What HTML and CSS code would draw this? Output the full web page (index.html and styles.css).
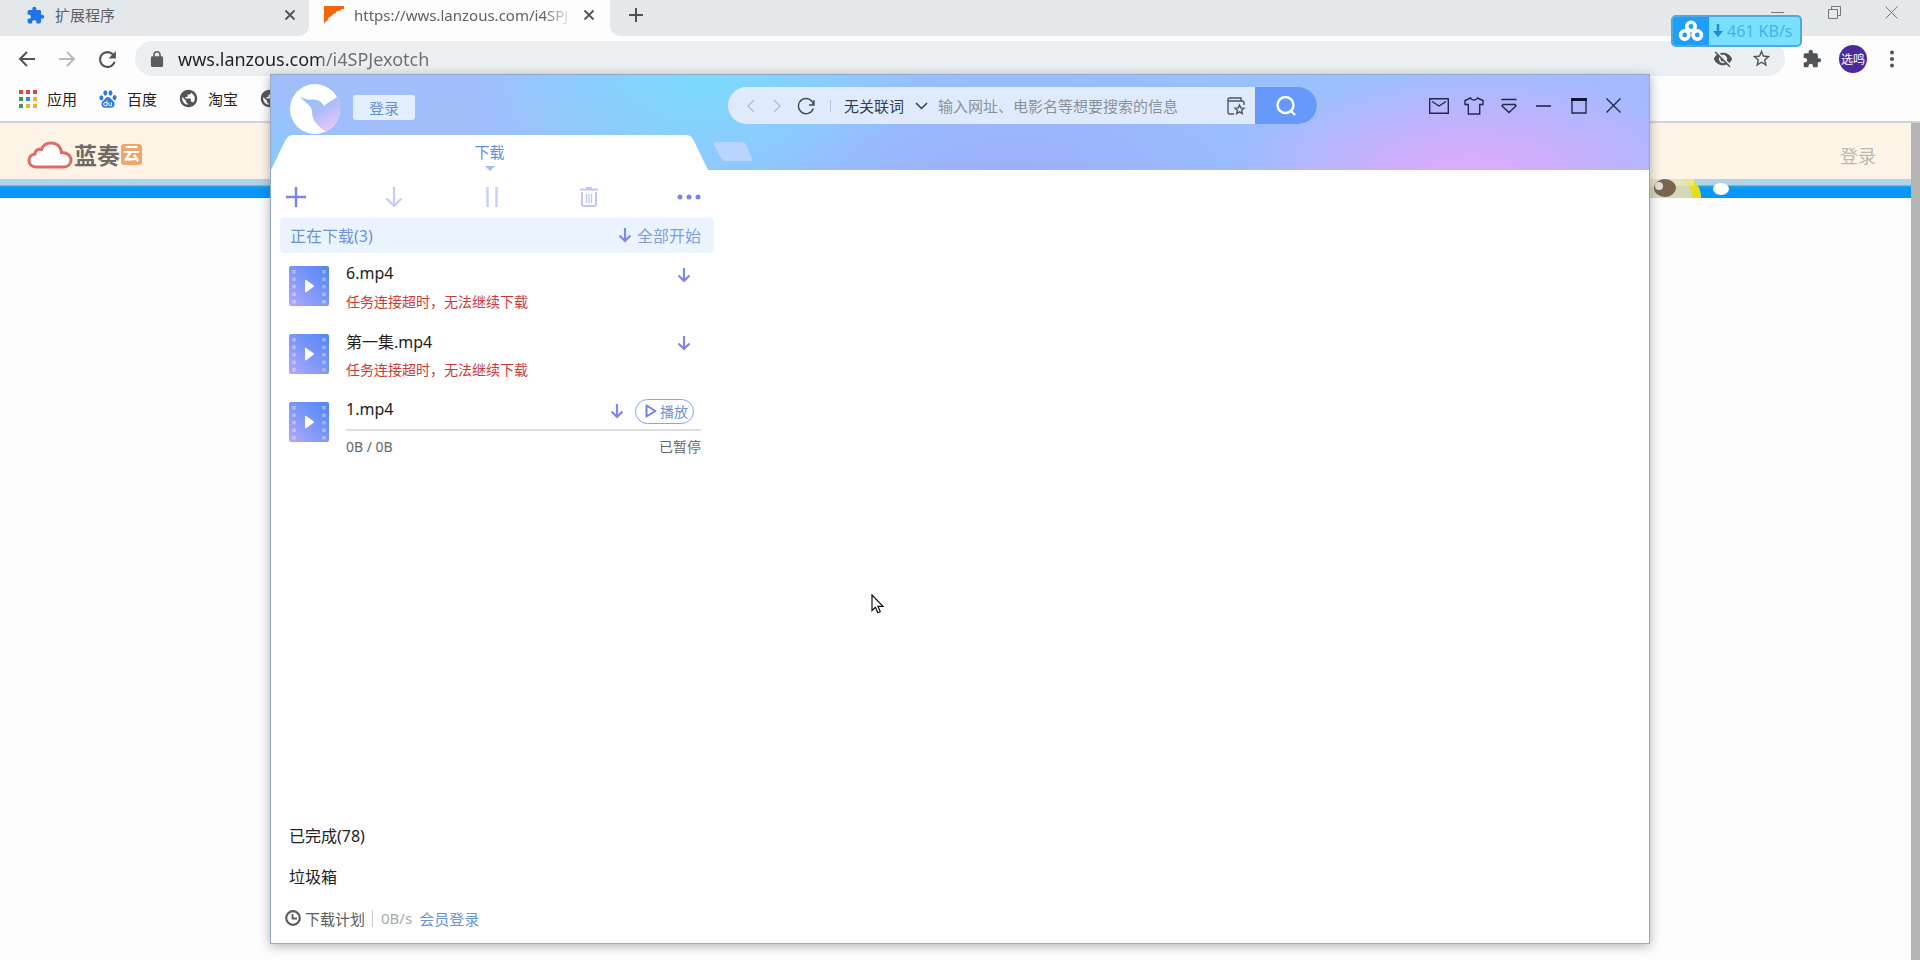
FILE: index.html
```html
<!DOCTYPE html>
<html lang="zh-CN">
<head>
<meta charset="utf-8">
<title>wws.lanzous.com/i4SPJexotch</title>
<link rel="stylesheet" href="styles.css">
</head>
<body>
<svg class="defs" width="0" height="0" aria-hidden="true">
  <defs>
    <linearGradient id="g-film" x1="0" y1="1" x2="1" y2="0">
      <stop offset="0" stop-color="#b4a8fb"/><stop offset=".5" stop-color="#7d97f8"/><stop offset="1" stop-color="#4f86f7"/>
    </linearGradient>
    <linearGradient id="g-arrow" x1="0" y1="0" x2="0" y2="1">
      <stop offset="0" stop-color="#6f94ea"/><stop offset="1" stop-color="#8a7fe6"/>
    </linearGradient>
    <linearGradient id="g-bird" x1="0" y1="0" x2=".7" y2="1">
      <stop offset="0" stop-color="#8fc4fa"/><stop offset=".5" stop-color="#adbcfa"/><stop offset="1" stop-color="#e6c8f6"/>
    </linearGradient>
    <symbol id="i-puzzle" viewBox="0 0 24 24"><path d="M20.500 11H19V7c0-1.100-.9-2-2-2h-4V3.500C13 2.120 11.880 1 10.500 1S8 2.120 8 3.500V5H4c-1.100 0-1.990.9-1.990 2v3.800H3.500c1.490 0 2.700 1.210 2.700 2.700s-1.210 2.700-2.700 2.700H2V20c0 1.100.9 2 2 2h3.800v-1.500c0-1.490 1.210-2.700 2.700-2.700 1.490 0 2.700 1.210 2.700 2.700V22H17c1.100 0 2-.9 2-2v-4h1.500c1.380 0 2.500-1.120 2.500-2.500S21.880 11 20.500 11z"/></symbol>
    <symbol id="i-x" viewBox="0 0 12 12"><path d="M1.500 1.500l9 9M10.500 1.500l-9 9" fill="none" stroke="currentColor" stroke-width="1.800"/></symbol>
    <symbol id="i-globe" viewBox="0 0 24 24"><path d="M12 1C5.900 1 1 5.900 1 12s4.900 11 11 11 11-4.900 11-11S18.100 1 12 1zm-1 18.930c-3.950-.49-7-3.850-7-7.930 0-.62.08-1.210.21-1.790L9 15v1c0 1.100.9 2 2 2v1.930zm6.900-2.540c-.26-.81-1-1.390-1.900-1.390h-1v-3c0-.55-.45-1-1-1H8v-2h2c.55 0 1-.45 1-1V7h2c1.100 0 2-.9 2-2v-.41c2.930 1.190 5 4.060 5 7.410 0 2.080-.8 3.970-2.100 5.390z"/></symbol>
    <symbol id="i-down" viewBox="0 0 14 16"><path d="M7 1v13M1.500 8.500L7 14l5.500-5.500" fill="none" stroke="url(#g-arrow)" stroke-width="2.200"/></symbol>
    <symbol id="i-film" viewBox="0 0 40 40">
      <rect width="40" height="40" rx="2" fill="url(#g-film)"/>
      <path d="M5 4v34M35 4v34" stroke="#fff" stroke-opacity=".35" stroke-width="3.500" stroke-dasharray="3.500 4"/>
      <path d="M16 14.500c0-.8.6-1 1.200-.6l7.300 5.400c.7.500.7 1 0 1.500l-7.300 5.400c-.6.400-1.200.2-1.200-.6z" fill="#fff"/>
    </symbol>
  </defs>
</svg>

<div class="browser">
  <header class="tabstrip">
    <div class="tab">
      <svg class="puzzle-blue" width="19" height="19"><use href="#i-puzzle"/></svg>
      <span class="tab-title">扩展程序</span>
      <button class="plain tab-close" aria-label="关闭标签页"><svg width="12" height="12"><use href="#i-x"/></svg></button>
    </div>
    <div class="tab tab-active">
      <svg width="20" height="18" viewBox="0 0 20 18"><path d="M0 0h20v3c-2 0-3 0-4 2-2-.5-4 .5-4.500 2.500C9 7.500 8 9 7.500 10.500 5 10.500 4 12 3.500 14.500 2 15 1 16 0 18z" fill="#f4650c"/></svg>
      <span class="tab-title tab-fade">https://wws.lanzous.com/i4SPJ</span>
      <button class="plain tab-close" aria-label="关闭标签页"><svg width="12" height="12"><use href="#i-x"/></svg></button>
    </div>
    <button class="plain new-tab" aria-label="新标签页"><svg width="16" height="16" viewBox="0 0 16 16"><path d="M8 1v14M1 8h14" stroke="#4d5257" stroke-width="2"/></svg></button>
    <div class="os-controls">
      <button class="plain" aria-label="最小化"><svg width="13" height="13" viewBox="0 0 13 13"><path d="M0 6.500h13" stroke="#777"/></svg></button>
      <button class="plain" aria-label="还原"><svg width="13" height="13" viewBox="0 0 13 13"><path d="M.5 3.500h9v9h-9zM3.500 3V.5h9v9H10" fill="none" stroke="#777"/></svg></button>
      <button class="plain" aria-label="关闭"><svg width="13" height="13" viewBox="0 0 13 13"><path d="M.5.5l12 12M12.500.5l-12 12" stroke="#777"/></svg></button>
    </div>
  </header>

  <nav class="navbar">
    <div class="nav-buttons">
      <button class="plain" aria-label="后退"><svg width="18" height="16" viewBox="0 0 18 16"><path d="M17 8H2M9 1L2 8l7 7" fill="none" stroke="#505458" stroke-width="2"/></svg></button>
      <button class="plain" aria-label="前进"><svg width="18" height="16" viewBox="0 0 18 16"><path d="M1 8h15M9 1l7 7-7 7" fill="none" stroke="#b9bcbf" stroke-width="2"/></svg></button>
      <button class="plain" aria-label="重新加载"><svg width="20" height="20" viewBox="3 2 19 19"><path fill="#505458" d="M17.650 6.350C16.200 4.900 14.210 4 12 4c-4.420 0-7.990 3.580-7.990 8s3.570 8 7.990 8c3.730 0 6.840-2.550 7.730-6h-2.080c-.82 2.330-3.040 4-5.650 4-3.310 0-6-2.690-6-6s2.690-6 6-6c1.660 0 3.140.69 4.220 1.780L13 11h7V4l-2.350 2.350z"/></svg></button>
    </div>
    <div class="omnibox">
      <svg width="14" height="16" viewBox="4 1 16 21" fill="#5a5e62"><path d="M18 8h-1V6c0-2.760-2.240-5-5-5S7 3.240 7 6v2H6c-1.100 0-2 .9-2 2v10c0 1.100.9 2 2 2h12c1.100 0 2-.9 2-2V10c0-1.100-.9-2-2-2zm-3.100 0H9.100V6c0-1.710 1.200-3.100 2.900-3.100s2.900 1.390 2.900 3.100v2z"/></svg>
      <input class="url" aria-label="地址" value="wws.lanzous.com/i4SPJexotch">
      <button class="plain" aria-label="已屏蔽"><svg width="20" height="20" viewBox="0 0 24 24" fill="#505458"><path d="M12 7c2.760 0 5 2.240 5 5 0 .65-.13 1.260-.36 1.830l2.920 2.920c1.510-1.260 2.700-2.890 3.430-4.750-1.730-4.390-6-7.500-11-7.500-1.400 0-2.740.25-3.980.7l2.160 2.160C10.740 7.130 11.350 7 12 7zM2 4.270l2.280 2.280.46.46C3.080 8.300 1.780 10.020 1 12c1.730 4.390 6 7.500 11 7.500 1.550 0 3.030-.3 4.380-.84l.42.42L19.730 22 21 20.730 3.270 3 2 4.270zM7.530 9.800l1.550 1.550c-.05.21-.08.43-.08.65 0 1.660 1.340 3 3 3 .22 0 .44-.03.65-.08l1.550 1.550c-.67.33-1.410.53-2.200.53-2.760 0-5-2.240-5-5 0-.79.2-1.530.53-2.200z"/></svg></button>
      <button class="plain" aria-label="收藏"><svg width="21" height="21" viewBox="0 0 24 24" fill="#505458"><path d="M22 9.240l-7.190-.62L12 2 9.190 8.630 2 9.240l5.460 4.730L5.820 21 12 17.270 18.180 21l-1.630-7.030L22 9.240zM12 15.400l-3.760 2.270 1-4.280-3.320-2.880 4.380-.38L12 6.100l1.710 4.040 4.380.38-3.320 2.880 1 4.280L12 15.400z"/></svg></button>
    </div>
    <div class="nav-extra">
      <button class="plain" aria-label="扩展程序"><svg width="20" height="20" fill="#505458"><use href="#i-puzzle"/></svg></button>
      <button class="plain avatar">选鸣</button>
      <button class="plain more" aria-label="菜单"><svg width="4" height="18" viewBox="0 0 4 18" fill="#505458"><circle cx="2" cy="2.500" r="2"/><circle cx="2" cy="9" r="2"/><circle cx="2" cy="15.500" r="2"/></svg></button>
    </div>
  </nav>

  <nav class="bookmarks" aria-label="书签">
    <a href="#"><svg width="18" height="18" viewBox="0 0 18 18"><path fill="#d5473f" d="M0 0h4v4H0zM7 0h4v4H7zM14 0h4v4h-4z"/><path fill="#3f9b57" d="M0 7h4v4H0zM0 14h4v4H0z"/><path fill="#3f7fe0" d="M7 7h4v4H7z"/><path fill="#eeb42c" d="M7 14h4v4H7zM14 7h4v4h-4zM14 14h4v4h-4z"/></svg><span>应用</span></a>
    <a href="#"><svg width="18" height="18" viewBox="0 0 18 18" fill="#2f7be0"><ellipse cx="2.400" cy="7.800" rx="2" ry="2.600"/><ellipse cx="6.300" cy="3" rx="2" ry="2.700"/><ellipse cx="11.500" cy="3" rx="2" ry="2.700"/><ellipse cx="15.600" cy="7.600" rx="2" ry="2.600"/><path d="M9 7c2 0 2.800 1.800 4 3 1.500 1.400 3 2.500 2.500 5-.5 2.200-2 2.700-3.500 2.700H6c-1.500 0-3-.6-3.500-2.700C2 12.500 3.500 11.400 5 10c1.200-1.200 2-3 4-3z"/><path d="M8 10.500v5.300H6.300a1.500 1.500 0 0 1 0-3.300H8M10 12.500v2.200c0 .7.300 1.100 1 1.100h1.500v-3.300" fill="none" stroke="#fff"/></svg><span>百度</span></a>
    <a href="#"><svg width="19" height="19" fill="#505458"><use href="#i-globe"/></svg><span>淘宝</span></a>
    <a href="#" aria-label="书签"><svg width="19" height="19" fill="#505458"><use href="#i-globe"/></svg></a>
  </nav>

  <main class="page">
    <div class="page-body">
      <div class="site-header">
        <a class="site-logo" href="#">
          <svg width="46" height="28" viewBox="0 0 46 28"><path d="M10 26C4.500 26 2 23 2 19.500S4.500 13.500 8 13c0-3.500 3-5.500 6.500-4.500C16 4.500 19.500 2 24 2c6 0 10 4 10.500 9.500 5.500 0 9.500 3 9.500 7.500 0 4-3 7-7.500 7z" fill="#fff" stroke="#e06a66" stroke-width="3"/></svg>
          <span class="logo-text">蓝奏</span><span class="logo-box">云</span>
        </a>
        <a class="site-login" href="#">登录</a>
      </div>
      <div class="banner">
        <svg width="112" height="19" viewBox="0 0 112 19" aria-hidden="true">
          <path d="M0 0h50c5 5 8 11 9 19H0z" fill="#d3d9b8"/>
          <path d="M40 0h10c6 5 9 11 9 19h-9C50 11 47 5 40 0z" fill="#e2e01c"/>
          <rect width="52" height="7" fill="#f2eac0" opacity=".6"/>
          <ellipse cx="23" cy="9" rx="11" ry="9" fill="#796353"/><ellipse cx="17" cy="7" rx="4" ry="4" fill="#e5ddd6"/>
          <ellipse cx="79" cy="10" rx="8" ry="6" fill="#fff"/>
        </svg>
      </div>
    </div>
    <div class="scrollbar"></div>
  </main>
</div>

<aside class="speed">
  <span class="speed-logo"><svg width="26" height="22" viewBox="0 0 26 22" fill="none" stroke="#fff" stroke-width="3.600"><circle cx="13" cy="6.500" r="4.200"/><circle cx="6.700" cy="15" r="4.200"/><circle cx="19.300" cy="15" r="4.200"/></svg></span>
  <svg width="10" height="14" viewBox="0 0 10 14"><path d="M3.700 0h2.600v7H10l-5 6-5-6h3.700z" fill="#1790dc"/></svg>
  <span class="speed-text">461 KB/s</span>
</aside>

<section class="app" aria-label="下载">
  <header class="app-header">
    <div class="app-bar">
      <div class="account">
        <svg width="50" height="50" viewBox="0 0 50 50"><circle cx="25" cy="25" r="25" fill="#fff"/><path d="M10 13c5 2 8 3 12 2.500 6-.5 10 2.500 12 6.500 4-4 9-5.500 13-9a25 25 0 0 1-11 34.500C27 42 22 36 22 28c0-6-5-8-12-15z" fill="url(#g-bird)"/></svg>
        <button class="login">登录</button>
      </div>
      <form class="search">
        <button type="button" class="plain" aria-label="后退"><svg width="8" height="14" viewBox="0 0 8 14"><path d="M7 1L1 7l6 6" fill="none" stroke="#b3c2d6" stroke-width="1.500"/></svg></button>
        <button type="button" class="plain" aria-label="前进"><svg width="8" height="14" viewBox="0 0 8 14"><path d="M1 1l6 6-6 6" fill="none" stroke="#b3c2d6" stroke-width="1.500"/></svg></button>
        <button type="button" class="plain reload" aria-label="刷新"><svg width="18" height="18" viewBox="0 0 18 18"><path d="M16.500 7.500a7.600 7.600 0 1 0-.2 4M17 3v5h-5" fill="none" stroke="#414b5c" stroke-width="1.400"/></svg></button>
        <span class="search-sep"></span>
        <label class="assoc"><select aria-label="关联词"><option>无关联词</option></select><svg width="13" height="8" viewBox="0 0 13 8"><path d="M1 1l5.500 5.500L12 1" fill="none" stroke="#333d4c" stroke-width="1.500"/></svg></label>
        <input class="query" type="text" aria-label="搜索" placeholder="输入网址、电影名等想要搜索的信息">
        <button type="button" class="plain" aria-label="收藏夹"><svg width="20" height="20" viewBox="0 0 20 20" fill="none" stroke="#4c5666" stroke-width="1.400"><path d="M8 18H4a2 2 0 0 1-2-2V3.500A1.500 1.500 0 0 1 3.500 2H15v3M2.500 5H16a2 2 0 0 1 2 2v2M13.500 9l1.300 2.900 3.200.3-2.400 2.100.7 3.200-2.800-1.700-2.800 1.700.7-3.200L9 12.200l3.200-.3z"/></svg></button>
        <button class="go" aria-label="搜索"><svg width="22" height="22" viewBox="0 0 22 22" fill="none" stroke="#fff" stroke-width="2.400"><circle cx="10.500" cy="10" r="8"/><path d="M15.500 15.500l4.500 4.500"/></svg></button>
      </form>
      <div class="app-controls">
        <button class="plain" aria-label="消息"><svg width="20" height="16" viewBox="0 0 20 16"><path d="M.7.7h18.600v14.600H.7zM3 3.500l7 4.500 7-4.500" fill="none" stroke="#1f2b4d" stroke-width="1.400"/></svg></button>
        <button class="plain" aria-label="皮肤"><svg width="20" height="18" viewBox="0 0 20 18"><path d="M6.500 1L1 3.500v4h3.300V17h11.400V7.500H19v-4L13.500 1c-1 2.600-6 2.600-7 0z" fill="none" stroke="#1f2b4d" stroke-width="1.400"/></svg></button>
        <button class="plain" aria-label="主菜单"><svg width="16" height="16" viewBox="0 0 16 16"><path d="M.5 1.500h15M2 6.500h12l1 1.500-7 6.500L1 8z" fill="none" stroke="#1f2b4d" stroke-width="1.500"/></svg></button>
        <button class="plain" aria-label="最小化"><svg width="15" height="15" viewBox="0 0 15 15"><path d="M0 8h15" stroke="#1f2b4d" stroke-width="1.600"/></svg></button>
        <button class="plain" aria-label="最大化"><svg width="16" height="16" viewBox="0 0 16 16"><path d="M1 1h14v14H1z" fill="none" stroke="#1f2b4d" stroke-width="1.400"/><path d="M0 1.500h16" stroke="#0d1633" stroke-width="3"/></svg></button>
        <button class="plain" aria-label="关闭"><svg width="15" height="15" viewBox="0 0 15 15"><path d="M.5.5l14 14M14.500.5l-14 14" stroke="#1f2b4d" stroke-width="1.400"/></svg></button>
      </div>
    </div>
    <div class="app-tabs">
      <div class="app-tab">
        <svg class="tab-shape" viewBox="0 0 437 35" preserveAspectRatio="none" aria-hidden="true"><path d="M0 35L14 6c2-4 4-6 9-6h391c5 0 7 2 9 6l14 29z" fill="#fefefe"/></svg>
        <button class="plain tab-label">下载<svg width="10" height="5" viewBox="0 0 10 5"><path d="M0 0h10L5 5z" fill="#9fbdf0"/></svg></button>
      </div>
      <button class="plain add-tab" aria-label="新建标签"><svg width="40" height="19" viewBox="0 0 40 19"><path d="M3 0h26c2 0 3 1 4 2.500L39 16c1 2 0 3-1.500 3H12c-2 0-3-1-4-3L1 3C0 1 1 0 3 0z" fill="#b9d5fd"/></svg></button>
    </div>
  </header>

  <div class="panel">
    <div class="tools">
      <button class="plain" aria-label="新建"><svg width="20" height="20" viewBox="0 0 20 20"><path d="M10 0v20M0 10h20" stroke="#7c84e4" stroke-width="2.400"/></svg></button>
      <button class="plain" aria-label="开始"><svg width="20" height="20" viewBox="0 0 20 20"><path d="M10 0v19M2.500 11.500L10 19l7.500-7.500" fill="none" stroke="#c6cbf4" stroke-width="2.200"/></svg></button>
      <button class="plain" aria-label="暂停"><svg width="20" height="20" viewBox="0 0 20 20"><path d="M5.500 0v20M14.500 0v20" stroke="#c9cff5" stroke-width="2.400"/></svg></button>
      <button class="plain" aria-label="删除"><svg width="20" height="20" viewBox="0 0 20 20" fill="none" stroke="#c1c6f2" stroke-width="2"><path d="M1 2.500h18M7 1h6M3 5v12q0 2 2 2h10q2 0 2-2V5"/><path d="M7.500 7v9M10 7v9M12.500 7v9" stroke-width="1.300"/></svg></button>
      <button class="plain" aria-label="更多"><svg width="24" height="6" viewBox="0 0 24 6" fill="#7c84e4"><circle cx="3" cy="3" r="2.500"/><circle cx="12" cy="3" r="2.500"/><circle cx="21" cy="3" r="2.500"/></svg></button>
    </div>
    <div class="group">
      <h2>正在下载(3)</h2>
      <button class="plain start-all"><svg width="14" height="16"><use href="#i-down"/></svg>全部开始</button>
    </div>
    <ul class="items">
      <li class="item">
        <svg width="40" height="40"><use href="#i-film"/></svg>
        <div class="item-body">
          <div class="item-top"><span class="name">6.mp4</span><button class="plain end" aria-label="开始"><svg width="14" height="16"><use href="#i-down"/></svg></button></div>
          <p class="error">任务连接超时，无法继续下载</p>
        </div>
      </li>
      <li class="item">
        <svg width="40" height="40"><use href="#i-film"/></svg>
        <div class="item-body">
          <div class="item-top"><span class="name">第一集.mp4</span><button class="plain end" aria-label="开始"><svg width="14" height="16"><use href="#i-down"/></svg></button></div>
          <p class="error">任务连接超时，无法继续下载</p>
        </div>
      </li>
      <li class="item">
        <svg width="40" height="40"><use href="#i-film"/></svg>
        <div class="item-body">
          <div class="item-top"><span class="name">1.mp4</span><button class="plain" aria-label="开始"><svg width="14" height="16"><use href="#i-down"/></svg></button><button class="play"><svg width="12" height="14" viewBox="0 0 12 14"><path d="M1.500 1.500L10.500 7l-9 5.500z" fill="none" stroke="#6f82e2" stroke-width="2" stroke-linejoin="round"/></svg>播放</button></div>
          <div class="track"></div>
          <div class="status"><span>0B / 0B</span><span>已暂停</span></div>
        </div>
      </li>
    </ul>
    <div class="folders">
      <button class="plain">已完成(78)</button>
      <button class="plain">垃圾箱</button>
    </div>
    <footer class="app-footer">
      <button class="plain plan"><svg width="16" height="16" viewBox="0 0 16 16" fill="none" stroke="#5c5c5c" stroke-width="2.200"><circle cx="8" cy="8" r="6.800"/><path d="M7.500 4v4.500H12" stroke-width="1.800"/></svg>下载计划</button>
      <span class="rate">0B/s</span>
      <a href="#">会员登录</a>
    </footer>
  </div>
</section>

<svg class="cursor" width="13" height="20" viewBox="0 0 13 20" aria-hidden="true"><path d="M1 1v15.500l3.500-3.300 2.300 5.500 2.500-1-2.300-5.400H12z" fill="#fff" stroke="#111" stroke-width="1.200"/></svg>
</body>
</html>
```

FILE: styles.css
```css
* { box-sizing: border-box; }

body {
  margin: 0;
  font-family: "Noto Sans", "Noto Sans CJK SC", sans-serif;
  font-size: 15px;
  color: #222;
  background: #fdfdfd;
}

svg { display: block; flex: none; }
a { color: inherit; text-decoration: none; }
.defs { position: absolute; }

.plain {
  padding: 0;
  border: 0;
  background: none;
  font: inherit;
  color: inherit;
  flex: none;
}

/* browser chrome */
.browser {
  display: flex;
  flex-direction: column;
  height: 100vh;
  overflow: hidden;
}

.tabstrip {
  display: flex;
  height: 36px;
  background: #fdfdfd;
}
.tab {
  display: flex;
  align-items: center;
  gap: 10px;
  width: 309px;
  padding: 0 13px 6px 26px;
  color: #5d6165;
  background: #e4e8eb;
  border-bottom-right-radius: 10px;
}
.tab-active {
  width: 301px;
  padding: 0 15px 6px 15px;
  background: #fdfdfd;
}
.puzzle-blue { fill: #1f74ea; }
.tab-title { flex: 1; min-width: 0; white-space: nowrap; line-height: 24px; }
.tab-fade { mask-image: linear-gradient(to right, #000 86%, transparent); }
.tab-close { color: #505458; }
.new-tab {
  width: 52px;
  padding: 0 8px 6px 18px;
  background: #e4e8eb;
  border-bottom-left-radius: 10px;
}
.os-controls {
  flex: 1;
  display: flex;
  justify-content: flex-end;
  gap: 44px;
  padding: 0 22px 12px 0;
  background: #e4e8eb;
}

.navbar {
  display: flex;
  align-items: center;
  height: 44px;
  padding: 1px 26px 0 18px;
}
.nav-buttons { display: flex; align-items: center; width: 117px; gap: 22px; }
.omnibox {
  flex: 1;
  display: flex;
  align-items: center;
  gap: 18px;
  height: 35px;
  padding: 0 13px 0 15px;
  background: #eceff1;
  border-radius: 18px;
}
.url {
  flex: 1;
  min-width: 0;
  margin-left: -4px;
  padding: 0;
  border: 0;
  outline: 0;
  font: inherit;
  font-size: 18px;
  line-height: 24px;
  color: transparent;
  background: linear-gradient(to right, #202124 144px, #6a6e72 144px);
  background-clip: text;
  -webkit-background-clip: text;
}
.nav-extra { display: flex; align-items: center; gap: 17px; margin-left: 17px; }
.more { margin-left: 6px; }
.avatar {
  width: 28px;
  height: 28px;
  border-radius: 50%;
  font-size: 12px;
  color: #fff;
  background: #4b2a9f;
}

.bookmarks {
  display: flex;
  align-items: center;
  gap: 22px;
  height: 43px;
  padding: 0 19px 4px;
  border-bottom: 2px solid #d2d4d4;
}
.bookmarks a { display: flex; align-items: center; gap: 10px; }

/* web page */
.page { flex: 1; display: flex; }
.page-body { flex: 1; }
.scrollbar { width: 9px; background: #b4b4b4; }
.site-header {
  display: flex;
  align-items: center;
  justify-content: space-between;
  height: 56px;
  padding: 7px 35px 0 27px;
  background: #fdf4e7;
}
.site-logo { display: flex; align-items: center; gap: 1px; }
.logo-text { font-size: 23px; font-weight: 700; line-height: 28px; color: #6e6b66; }
.logo-box {
  width: 21px;
  height: 21px;
  border-radius: 3px;
  font-size: 17px;
  font-weight: 700;
  line-height: 20px;
  text-align: center;
  color: #fff;
  background: #f2a568;
}
.site-login { font-size: 18px; color: #bdb8b0; }
.banner {
  display: flex;
  justify-content: flex-end;
  height: 19px;
  padding-right: 157px;
  background: linear-gradient(#aed4e5 0 6px, #3c9fd6 7px, #0597fc 9px);
}

/* network speed badge */
.speed {
  position: absolute;
  top: 15px;
  right: 118px;
  display: flex;
  align-items: center;
  gap: 4px;
  width: 131px;
  height: 32px;
  border: 2px solid #4fa9dd;
  border-radius: 5px;
  overflow: hidden;
  background: #7ae0ff;
}
.speed-logo {
  display: flex;
  align-items: center;
  justify-content: center;
  width: 36px;
  height: 100%;
  background: #1f9dfa;
}
.speed-text { font-size: 16px; color: #41b4ea; white-space: nowrap; }

/* download manager window */
.app {
  position: absolute;
  inset: 74px 270px 16px 270px;
  display: flex;
  flex-direction: column;
  border: 1px solid #93a9c8;
  background: #fefefe;
  box-shadow: 0 2px 10px rgba(60, 60, 80, .4);
}
.app-header {
  display: flex;
  flex-direction: column;
  justify-content: space-between;
  height: 95px;
  background:
    radial-gradient(ellipse 240px 110px at 87% 110%, #e0aafd 0, rgba(214, 172, 253, .8) 40%, rgba(180, 180, 255, 0) 100%),
    radial-gradient(ellipse 220px 130px at 31% 0, #7bdaff 0, rgba(127, 216, 255, .8) 30%, rgba(150, 200, 255, 0) 100%),
    radial-gradient(ellipse 320px 120px at 54% 100%, #9cb0fc 0, rgba(156, 176, 252, 0) 100%),
    radial-gradient(ellipse 100px 80px at 0 100%, #88c8ff 0, rgba(136, 200, 255, 0) 100%),
    linear-gradient(to right, #a1befb 0, #a1befb 15%, #93c3fd 35%, #9cbffd 80%, #a6b9ff 100%);
}
.app-bar {
  display: flex;
  align-items: center;
  justify-content: space-between;
  height: 60px;
  padding: 5px 18px 0 19px;
}
.account { display: flex; align-items: center; gap: 13px; width: 438px; }
.account svg { margin-top: 2px; }
.login {
  width: 62px;
  height: 25px;
  padding: 0;
  border: 0;
  border-radius: 3px;
  font: inherit;
  line-height: 20px;
  color: #6590d6;
  background: #e3effd;
}
.search {
  flex: 1;
  display: flex;
  align-items: center;
  gap: 18px;
  max-width: 589px;
  height: 37px;
  margin-bottom: 4px;
  padding-left: 19px;
  border-radius: 19px;
  overflow: hidden;
  background: #dfebfc;
}
.reload { margin-left: -2px; }
.search-sep { width: 1px; height: 12px; margin: 0 -5px 0 -3px; background: #b6c3d8; }
.assoc { display: flex; align-items: center; gap: 10px; margin-right: -8px; }
.assoc select {
  appearance: none;
  width: 61px;
  padding: 0;
  border: 0;
  font: inherit;
  line-height: 22px;
  color: #333d4c;
  background: none;
}
.query {
  flex: 1;
  min-width: 0;
  padding: 0;
  border: 0;
  font: inherit;
  background: none;
}
.query::placeholder { color: #8a919c; opacity: 1; }
.go {
  display: flex;
  align-items: center;
  justify-content: center;
  width: 62px;
  height: 37px;
  margin-left: -9px;
  padding: 0;
  border: 0;
  background: #6798fb;
}
.app-controls { display: flex; align-items: center; margin: 0 0 4px auto; }
.app-controls button { display: flex; justify-content: center; width: 35px; }

.app-tabs { display: flex; align-items: center; gap: 5px; height: 35px; }
.app-tab { position: relative; width: 437px; height: 35px; }
.tab-shape { position: absolute; inset: 0; width: 100%; height: 100%; }
.tab-label {
  position: relative;
  display: flex;
  flex-direction: column;
  align-items: center;
  gap: 3px;
  width: 100%;
  padding-top: 6px;
  line-height: 22px;
  color: #6590d6;
}
.add-tab { padding-bottom: 3px; }

.panel {
  flex: 1;
  display: flex;
  flex-direction: column;
  width: 452px;
  padding: 0 9px;
}
.tools {
  display: flex;
  align-items: center;
  justify-content: space-between;
  height: 48px;
  padding: 6px 13px 0 6px;
}
.group {
  display: flex;
  align-items: center;
  justify-content: space-between;
  height: 35px;
  padding: 0 13px 2px 10px;
  border-radius: 4px;
  color: #6c94d4;
  background: #ebf4fe;
}
.group h2 { margin: 0; font-size: 16px; font-weight: 400; }
.start-all { display: flex; align-items: center; gap: 5px; font-size: 16px; color: #7f9fdc; }

.items { flex: 1; margin: 0; padding: 8px 13px 0 9px; list-style: none; }
.item { display: flex; gap: 17px; height: 68px; padding-top: 5px; }
.item-body { flex: 1; }
.item-top { display: flex; align-items: center; gap: 11px; height: 24px; margin-top: -3px; }
.name { flex: 1; padding-bottom: 4px; font-size: 16px; color: #1d1d1d; }
.end { margin-right: 10px; }
.error { margin: 5px 0 0; font-size: 14px; line-height: 20px; color: #c93b3b; }
.play {
  display: flex;
  align-items: center;
  gap: 3px;
  height: 25px;
  margin-right: 7px;
  padding: 0 5px 0 9px;
  border: 1px solid #86a8e6;
  border-radius: 13px;
  font: inherit;
  font-size: 14px;
  color: #6c94d4;
  background: none;
}
.track { height: 2px; margin-top: 6px; background: #dedede; }
.status { display: flex; justify-content: space-between; margin-top: 6px; font-size: 14px; line-height: 20px; color: #666; }

.folders {
  display: flex;
  flex-direction: column;
  align-items: flex-start;
  gap: 17px;
  padding: 0 9px;
  font-size: 16px;
  line-height: 24px;
}
.app-footer {
  display: flex;
  align-items: center;
  gap: 7px;
  height: 54px;
  padding: 4px 5px 0;
  color: #5c5c5c;
}
.plan { display: flex; align-items: center; gap: 4px; }
.rate { padding-left: 8px; border-left: 1px solid #ccc; line-height: 17px; color: #aaa; }
.app-footer a { color: #6a93dc; }

.cursor { position: absolute; left: 871px; top: 594px; }
```
